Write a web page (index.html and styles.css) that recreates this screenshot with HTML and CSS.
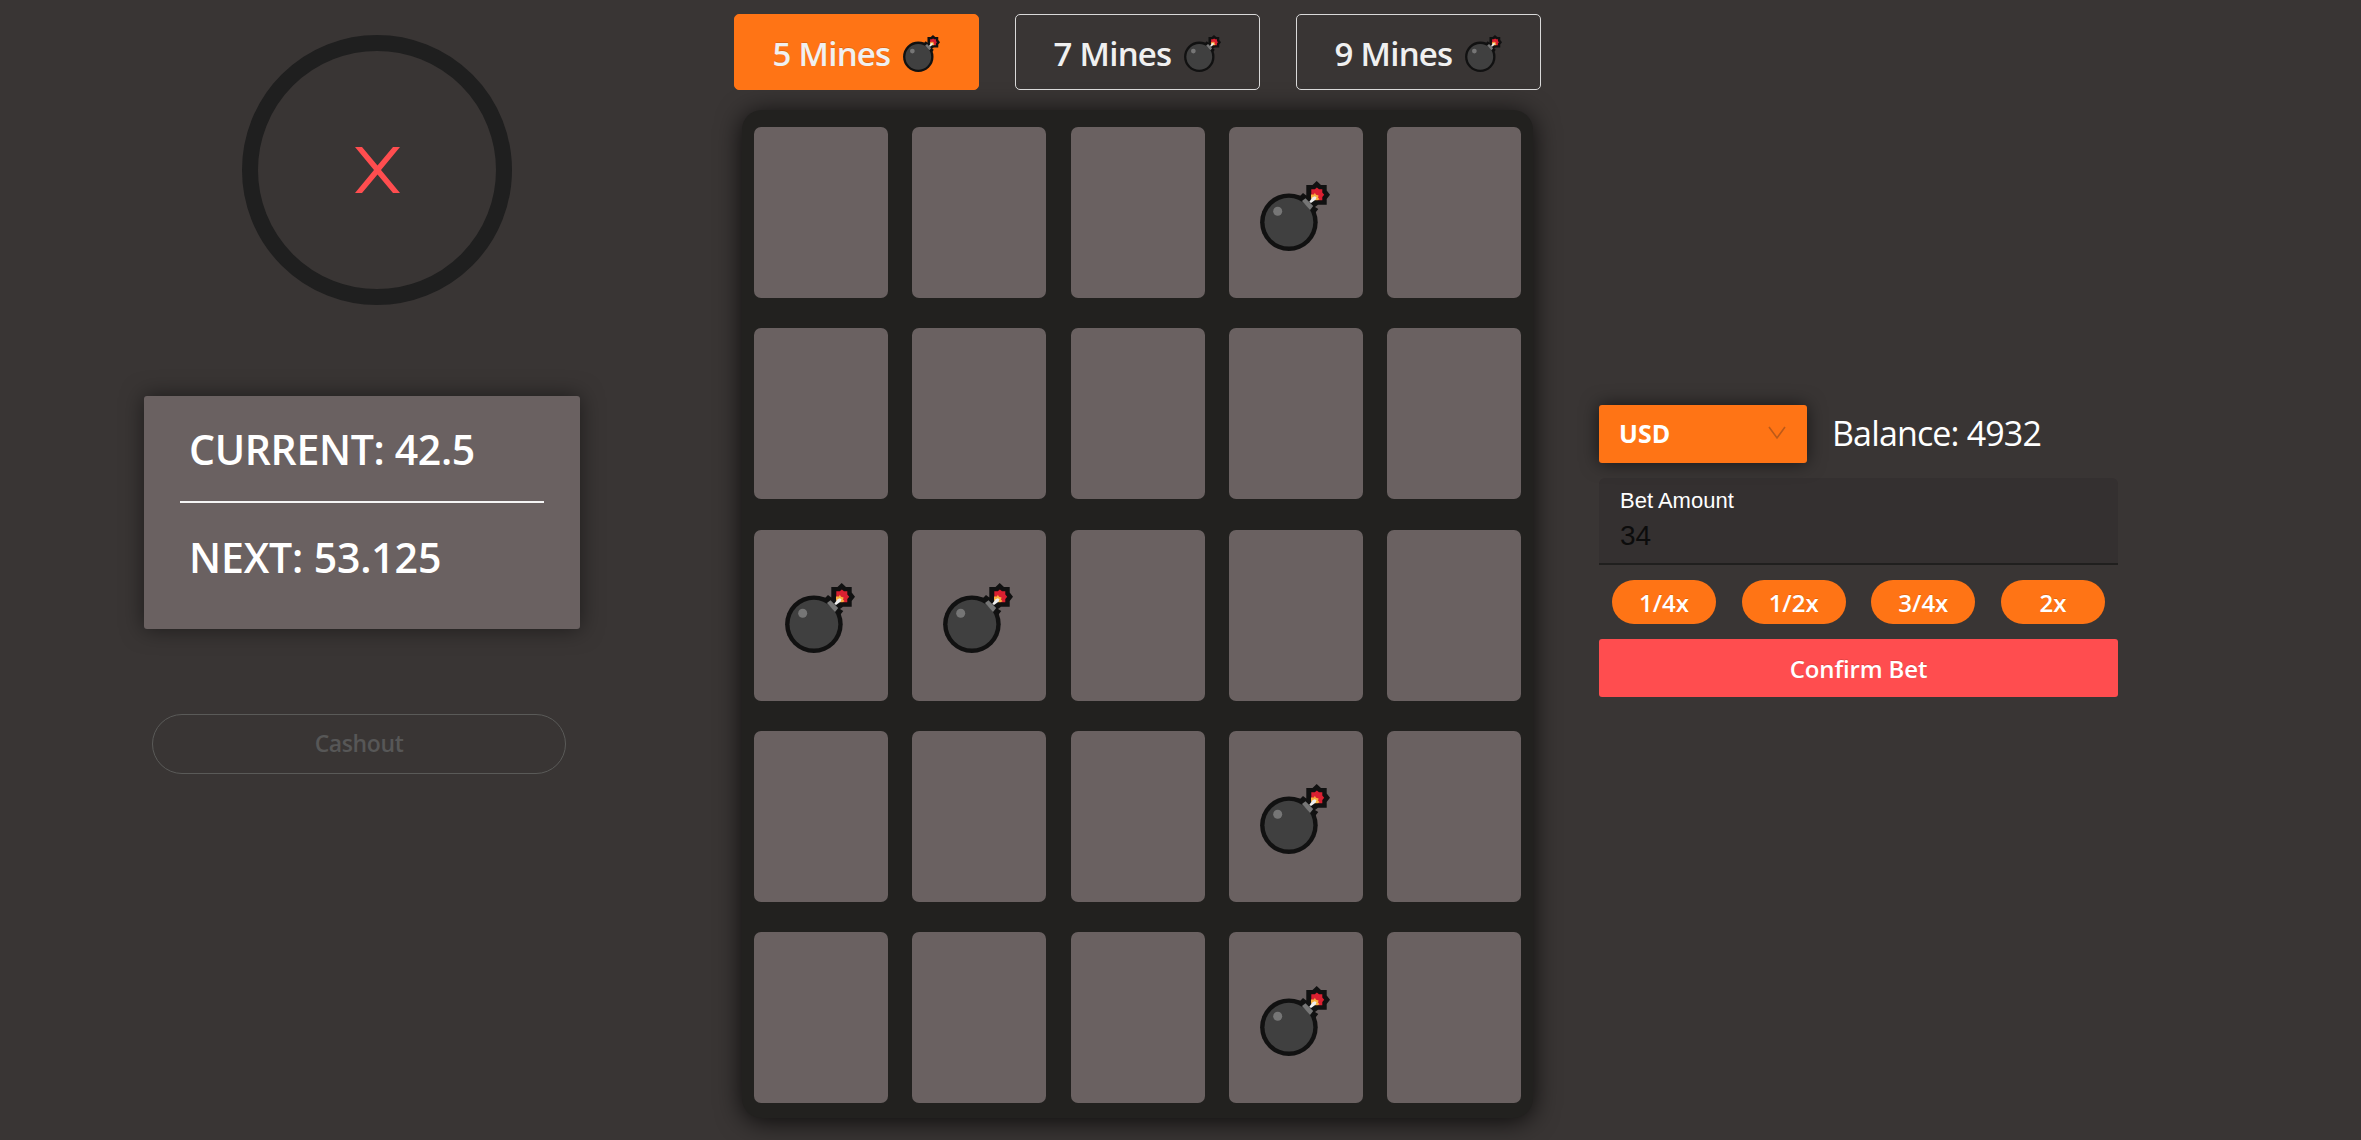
FILE: index.html
```html
<!DOCTYPE html>
<html lang="en">
<head>
<meta charset="utf-8">
<title>Mines</title>
<link rel="stylesheet" href="styles.css">
</head>
<body>
<svg class="defs" width="0" height="0" aria-hidden="true">
  <symbol id="bomb" viewBox="0 0 70 70">
    <path class="bomb-line" d="M56.7 0 61 4H66.7V9.5L70 13.7 66.7 18V23.7H58L55 26 58.3 28 54 33.5 38 17 43 12 46.3 14.5V4H52.5Z"/>
    <circle class="bomb-line" cx="28.9" cy="41.2" r="28.8"/>
    <circle class="bomb-body" cx="28.9" cy="41.2" r="24.4"/>
    <circle class="bomb-cap" cx="17.7" cy="30.3" r="4.5"/>
    <path class="bomb-cap" d="M42 20 45.5 17.2 53.2 25 50 29Z"/>
    <path class="bomb-fire" d="M56.9 6.5 59 8.2H62.3V11.5L64.2 13.7 62.3 16V19.3H58L51.3 17V8.2H54.8Z"/>
    <path class="bomb-spark" d="M54.8 11.8 56 13.8 58.6 14.4 58 16.5 59.5 18.3 57.5 19.2H55L51 17.5V13.5H54Z"/>
    <path class="bomb-fuse" d="M49.3 20.7 52.5 16.3 54.8 15.2 56.5 16.3 55.5 18.8 51 22Z"/>
  </symbol>
</svg>
<main class="game">
  <aside class="stats">
    <div class="ring">
      <svg class="cross" viewBox="0 0 45 46"><path d="M0 0H7L22.5 18.5 38 0H45L26 23 45 46H38L22.5 27.5 7 46H0L19 23Z"/></svg>
    </div>
    <section class="card">
      <div class="line current"><span>CURRENT: 42.5</span></div>
      <div class="line next"><span>NEXT: 53.125</span></div>
    </section>
    <button class="cashout" disabled>Cashout</button>
  </aside>
  <section class="center">
    <nav class="tabs">
      <button class="tab active"><span>5 Mines</span><svg><use href="#bomb"/></svg></button>
      <button class="tab"><span>7 Mines</span><svg><use href="#bomb"/></svg></button>
      <button class="tab"><span>9 Mines</span><svg><use href="#bomb"/></svg></button>
    </nav>
    <div class="board">
      <div class="tile"></div><div class="tile"></div><div class="tile"></div><div class="tile"><svg><use href="#bomb"/></svg></div><div class="tile"></div>
      <div class="tile"></div><div class="tile"></div><div class="tile"></div><div class="tile"></div><div class="tile"></div>
      <div class="tile"><svg><use href="#bomb"/></svg></div><div class="tile"><svg><use href="#bomb"/></svg></div><div class="tile"></div><div class="tile"></div><div class="tile"></div>
      <div class="tile"></div><div class="tile"></div><div class="tile"></div><div class="tile"><svg><use href="#bomb"/></svg></div><div class="tile"></div>
      <div class="tile"></div><div class="tile"></div><div class="tile"></div><div class="tile"><svg><use href="#bomb"/></svg></div><div class="tile"></div>
    </div>
  </section>
  <aside class="bet">
    <div class="wallet">
      <div class="select"><span>USD</span><svg viewBox="0 0 18 14"><path d="M1 1 9 12 17 1"/></svg></div>
      <span class="balance">Balance: 4932</span>
    </div>
    <div class="field"><label>Bet Amount</label><span class="amount">34</span></div>
    <div class="chips">
      <button class="chip">1/4x</button>
      <button class="chip">1/2x</button>
      <button class="chip">3/4x</button>
      <button class="chip">2x</button>
    </div>
    <button class="confirm">Confirm Bet</button>
  </aside>
</main>
</body>
</html>
```
FILE: styles.css
```css
* { box-sizing: border-box; }
body {
  margin: 0;
  height: 1140px;
  overflow: hidden;
  background: #393534;
  color: #fff;
  font-family: "Open Sans", "Noto Sans", sans-serif;
}
button { font-family: inherit; margin: 0; padding: 0; color: #fff; }
.defs { display: block; height: 0; }
.game { display: flex; height: 1140px; }

.bomb-line { fill: #111; }
.tab .bomb-line { fill: #000; }
.bomb-body { fill: #404040; }
.bomb-cap { fill: #767676; }
.bomb-fire { fill: #da2031; }
.bomb-spark { fill: #f8b040; }
.bomb-fuse { fill: #eee; }

.stats { width: 734px; padding: 35px 0 0 144px; }
.ring {
  width: 270px;
  height: 270px;
  margin-left: 98px;
  border: 16px solid #1f1f1f;
  border-radius: 50%;
  display: flex;
  align-items: center;
  justify-content: center;
}
.cross { width: 45px; height: 46px; fill: #ff4d4f; }
.card {
  width: 436px;
  height: 233px;
  margin-top: 91px;
  padding: 0 36px;
  background: #6a6161;
  border-radius: 3px;
  box-shadow: 0 0 22px rgba(0, 0, 0, .5);
  font-size: 41px;
  font-weight: 600;
}
.line { display: flex; align-items: center; padding-left: 9px; white-space: nowrap; }
.current { height: 107px; border-bottom: 2px solid #f5f5f5; letter-spacing: -.35px; }
.next { height: 108px; letter-spacing: -.15px; }
.cashout {
  display: block;
  width: 414px;
  height: 60px;
  margin: 85px 0 0 8px;
  background: none;
  border: 1px solid #5a5a58;
  border-radius: 30px;
  color: #575757;
  font-size: 23px;
  font-weight: 600;
  letter-spacing: -.4px;
  line-height: 56px;
  padding-bottom: 2px;
}

.center { width: 863px; padding-top: 14px; }
.tabs { display: flex; gap: 36px; }
.tab {
  display: flex;
  align-items: center;
  justify-content: center;
  gap: 13px;
  width: 245px;
  height: 76px;
  padding-top: 2px;
  background: none;
  border: 1px solid #d9d9d9;
  border-radius: 5px;
  color: #f0f0f0;
  font-size: 33px;
  font-weight: 600;
  letter-spacing: -.75px;
}
.tab.active {
  background: #ff7415;
  border-color: #ff7415;
  text-shadow: 0 -1px 0 rgba(0, 0, 0, .12);
}
.tab svg { width: 37px; height: 37px; }
.board {
  display: grid;
  grid-template-columns: repeat(5, 134px);
  grid-template-rows: repeat(5, 171px);
  justify-content: space-between;
  align-content: space-between;
  width: 791px;
  height: 1008px;
  margin: 20px 0 0 8px;
  padding: 17px 12px 15px;
  background: #22211f;
  border-radius: 20px;
  box-shadow: 0 3px 26px rgba(0, 0, 0, .8);
}
.tile {
  display: flex;
  align-items: center;
  justify-content: center;
  background: #6a6161;
  border-radius: 7px;
}
.tile svg { width: 70px; height: 70px; margin: 6px 2px 0 0; }

.bet { width: 522px; padding: 405px 1px 0 2px; }
.wallet { display: flex; align-items: center; height: 58px; gap: 25px; }
.select {
  display: flex;
  flex: none;
  align-items: center;
  justify-content: space-between;
  width: 208px;
  height: 58px;
  padding: 0 21px 3px 20px;
  background: #ff7415;
  border-radius: 3px;
  box-shadow: 0 0 18px rgba(0, 0, 0, .6);
  font-size: 25px;
  font-weight: 700;
}
.select svg { width: 18px; height: 14px; fill: none; stroke: #bd5a18; stroke-width: 1.6; }
.balance { font-size: 34px; letter-spacing: -.85px; white-space: nowrap; padding-bottom: 2px; }
.field {
  display: flex;
  flex-direction: column;
  height: 87px;
  margin-top: 15px;
  padding: 11px 21px 0;
  background: #343030;
  border-bottom: 2px solid #201f1e;
  border-radius: 6px 6px 0 0;
  font-family: "Liberation Sans", Arial, sans-serif;
}
.field label { font-size: 22px; line-height: 24px; }
.amount { font-size: 28px; line-height: 30px; margin-top: 8px; color: #0c0c0c; }
.chips { display: flex; justify-content: space-between; margin-top: 15px; padding: 0 13px; }
.chip {
  width: 104px;
  height: 44px;
  background: #ff7415;
  border: 0;
  border-radius: 22px;
  font-size: 24px;
  font-weight: 600;
  text-shadow: 0 -1px 0 rgba(0, 0, 0, .12);
}
.confirm {
  display: block;
  width: 519px;
  height: 58px;
  margin-top: 15px;
  background: #ff4d4f;
  border: 0;
  border-radius: 3px;
  font-size: 24px;
  font-weight: 600;
  letter-spacing: -.15px;
  text-shadow: 0 -1px 0 rgba(0, 0, 0, .12);
}
```
